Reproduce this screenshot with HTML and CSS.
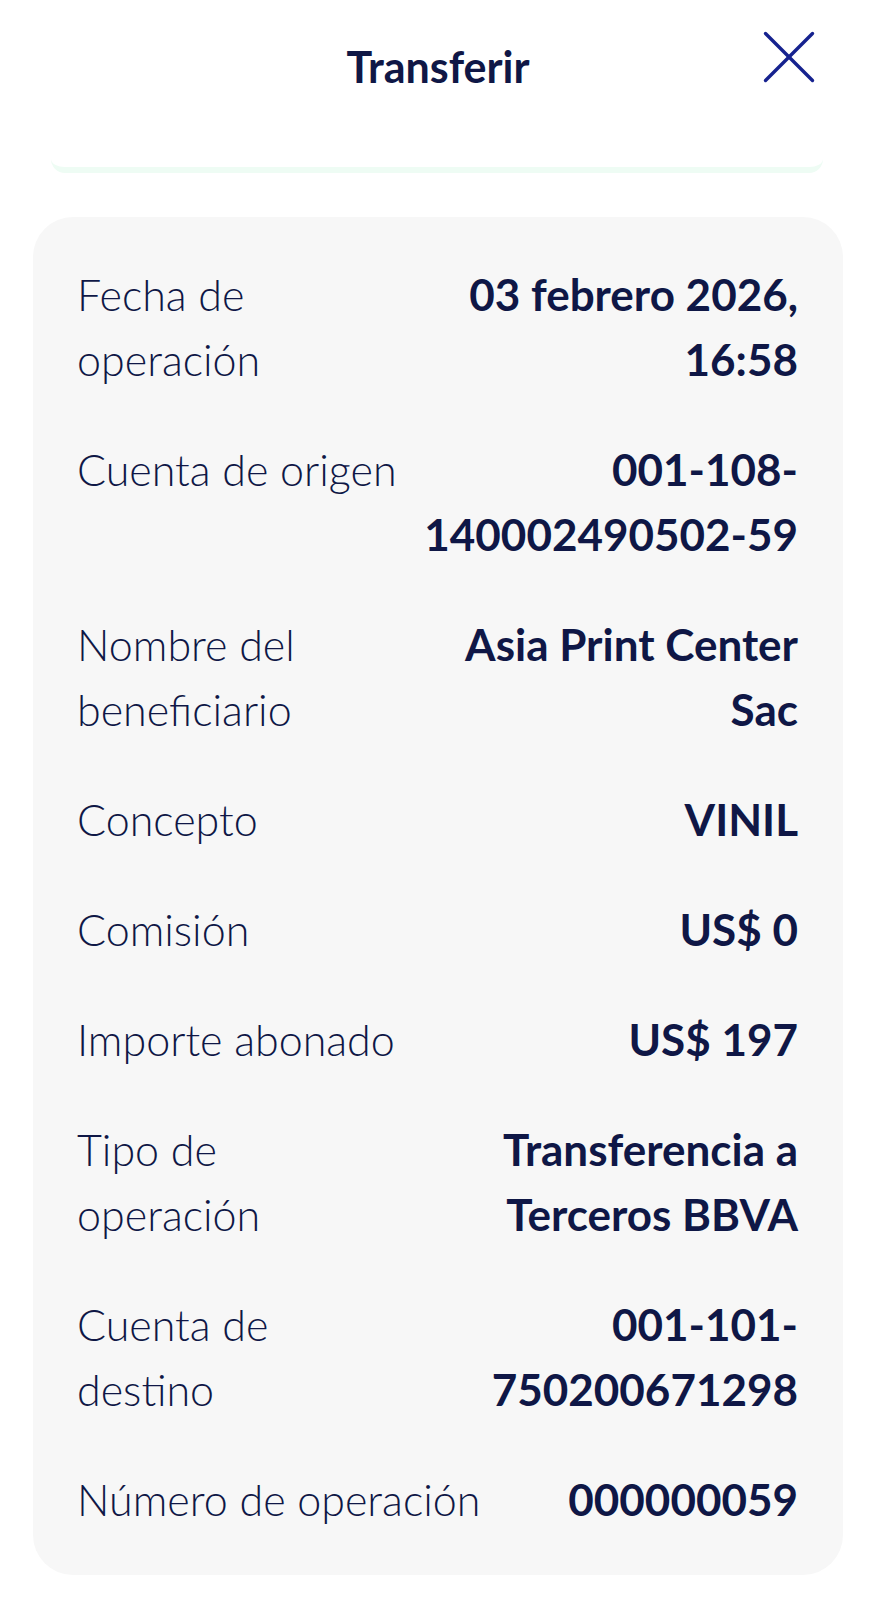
FILE: index.html
```html
<!DOCTYPE html>
<html lang="es">
<head>
  <meta charset="UTF-8">
  <meta name="viewport" content="width=device-width, initial-scale=1.0">
  <title>Transferir</title>
  <link rel="stylesheet" href="styles.css">
</head>
<body>
  <div class="header">
    <div class="title">Transferir</div>
    <button class="close-button" aria-label="Cerrar">
      <svg width="54" height="54" viewBox="0 0 54 54">
        <line x1="3.5" y1="3.5" x2="50.5" y2="50.5" />
        <line x1="50.5" y1="3.5" x2="3.5" y2="50.5" />
      </svg>
    </button>
  </div>

  <div class="summary-edge"></div>

  <div class="detail-card">
    <div class="row">
      <div class="label">Fecha de<br>operación</div>
      <div class="value">03 febrero 2026,<br>16:58</div>
    </div>
    <div class="row">
      <div class="label">Cuenta de origen</div>
      <div class="value">001-108-<br>140002490502-59</div>
    </div>
    <div class="row">
      <div class="label">Nombre del<br>beneficiario</div>
      <div class="value">Asia Print Center<br>Sac</div>
    </div>
    <div class="row">
      <div class="label">Concepto</div>
      <div class="value">VINIL</div>
    </div>
    <div class="row">
      <div class="label">Comisión</div>
      <div class="value">US$ 0</div>
    </div>
    <div class="row">
      <div class="label">Importe abonado</div>
      <div class="value">US$ 197</div>
    </div>
    <div class="row">
      <div class="label">Tipo de<br>operación</div>
      <div class="value">Transferencia a<br>Terceros BBVA</div>
    </div>
    <div class="row">
      <div class="label">Cuenta de<br>destino</div>
      <div class="value">001-101-<br>750200671298</div>
    </div>
    <div class="row">
      <div class="label">Número de operación</div>
      <div class="value">000000059</div>
    </div>
  </div>
</body>
</html>
```

FILE: styles.css
```css
/* General reset */
* {
  margin: 0;
  padding: 0;
  box-sizing: border-box;
}

body {
  background-color: #fff;
  font-family: Lato, "Liberation Sans", Arial, sans-serif;
  color: #0f1746;
}

/* Header styling */
.header {
  display: grid;
  grid-template-columns: 1fr auto 1fr;
  align-items: start;
  height: 130px;
}

.title {
  grid-column: 2;
  margin-top: 42px;
  font-size: 43px;
  line-height: 50px;
  font-weight: 700;
}

.close-button {
  grid-column: 3;
  justify-self: end;
  margin-top: 30px;
  margin-right: 60px;
  border: none;
  background: transparent;
  cursor: pointer;
  display: flex;
}

.close-button line {
  stroke: #16228f;
  stroke-width: 3.4;
  stroke-linecap: round;
}

/* Bottom edge of the card above */
.summary-edge {
  height: 43px;
  margin: 0 53px 44px 51px;
  border-bottom: 6px solid #eefcf4;
  border-radius: 0 0 14px 14px;
}

/* Detail card */
.detail-card {
  margin: 0 33px;
  padding: 45px 45px 43px 44px;
  background-color: #f7f7f7;
  border-radius: 40px;
  display: flex;
  flex-direction: column;
  gap: 45px;
}

.row {
  display: flex;
  justify-content: space-between;
  gap: 16px;
  line-height: 65px;
}

.label {
  font-size: 43px;
  font-weight: 300;
  white-space: nowrap;
}

.value {
  font-size: 44px;
  font-weight: 700;
  text-align: right;
  white-space: nowrap;
}
```
